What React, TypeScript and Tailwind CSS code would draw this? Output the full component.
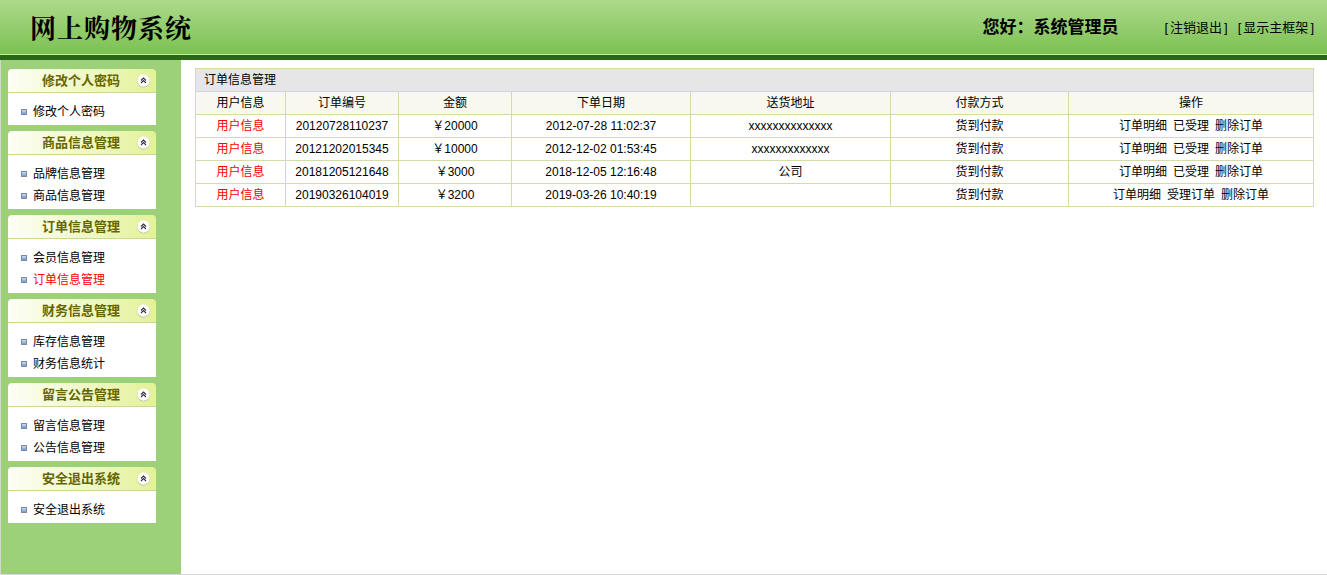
const menus = [
  { title: "修改个人密码", items: ["修改个人密码"] },
  { title: "商品信息管理", items: ["品牌信息管理", "商品信息管理"] },
  { title: "订单信息管理", items: ["会员信息管理", "订单信息管理"] },
  { title: "财务信息管理", items: ["库存信息管理", "财务信息统计"] },
  { title: "留言公告管理", items: ["留言信息管理", "公告信息管理"] },
  { title: "安全退出系统", items: ["安全退出系统"] },
];

const orders = [
  { no: "20120728110237", money: "￥20000", date: "2012-07-28 11:02:37", addr: "xxxxxxxxxxxxxx", ops: ["订单明细", "已受理", "删除订单"] },
  { no: "20121202015345", money: "￥10000", date: "2012-12-02 01:53:45", addr: "xxxxxxxxxxxxx", ops: ["订单明细", "已受理", "删除订单"] },
  { no: "20181205121648", money: "￥3000", date: "2018-12-05 12:16:48", addr: "公司", ops: ["订单明细", "已受理", "删除订单"] },
  { no: "20190326104019", money: "￥3200", date: "2019-03-26 10:40:19", addr: "", ops: ["订单明细", "受理订单", "删除订单"] },
];

const Chevron = () => (
  <svg width="15" height="15" viewBox="0 0 15 15">
    <circle cx="7.5" cy="8" r="6.5" fill="#b9b9a0" />
    <circle cx="7.5" cy="7.5" r="6.2" fill="#ffffff" />
    <path d="M5 7.5 L7.5 5 L10 7.5 M5 10 L7.5 7.5 L10 10" stroke="#333" strokeWidth="1.1" fill="none" />
  </svg>
);

const MenuBox = ({ title, items }: { title: string; items: string[] }) => (
  <div className="w-[148px]">
    <div className="flex h-[24px] items-center rounded-t-[4px] border-b border-[#c9d98f] bg-gradient-to-r from-[#fdfef6] to-[#e3f296] pl-[18px] pr-[5px]">
      <span className="flex-1 text-center text-[13px] font-bold text-[#666600]">{title}</span>
      <Chevron />
    </div>
    <div className="bg-white pb-[2px] pt-[8px]">
      {items.map((it) => (
        <div key={it} className="flex h-[22px] items-center pl-[13px]">
          <span className="mr-[6px] h-[6px] w-[6px] border border-[#7d8a9a] bg-gradient-to-b from-[#c9dcf7] to-[#6f9ad8]" />
          <span className={`text-[12px] ${it === "订单信息管理" ? "text-[#ff0000]" : "text-black"}`}>{it}</span>
        </div>
      ))}
    </div>
  </div>
);

const Cell = ({ children, className = "" }: { children?: React.ReactNode; className?: string }) => (
  <td className={`h-[23px] border border-[#d3dea6] p-0 text-center text-[12px] ${className}`}>{children}</td>
);

const Link = ({ text }: { text: string }) => (
  <span className="text-[13px]">
    [<span className="mx-[2px]">{text}</span>]
  </span>
);

export default function App() {
  return (
    <div className="flex h-[575px] w-full flex-col overflow-hidden font-['Liberation_Sans','Noto_Sans_CJK_SC',sans-serif] leading-none text-black">
      <header className="flex h-[54px] items-center bg-gradient-to-b from-[#acd98a] to-[#7cc152] pl-[30px] pr-[13px]">
        <h1 className="flex-1 font-['Noto_Serif_CJK_SC','Noto_Sans_CJK_SC',serif] text-[26px] font-bold tracking-[1px]">网上购物系统</h1>
        <span className="mr-[46px] text-[17px] font-bold">您好：系统管理员</span>
        <span className="mr-[10px]">
          <Link text="注销退出" />
        </span>
        <Link text="显示主框架" />
      </header>
      <div className="h-px bg-[#c6eb9c]" />
      <div className="h-[5px] bg-[#2a6816]" />
      <div className="flex flex-1 border-b border-[#d8d8d8]">
        <aside className="flex w-[181px] flex-col gap-[6px] border-l border-[#d0d8c8] bg-[#9dd179] pl-[7px] pt-[9px]">
          {menus.map((m) => (
            <MenuBox key={m.title} title={m.title} items={m.items} />
          ))}
        </aside>
        <main className="flex-1 bg-white pl-[14px] pr-[13px] pt-[8px]">
          <table className="w-full table-fixed border-collapse">
            <colgroup>
              <col className="w-[90px]" />
              <col className="w-[113px]" />
              <col className="w-[113px]" />
              <col className="w-[179px]" />
              <col className="w-[200px]" />
              <col className="w-[178px]" />
              <col />
            </colgroup>
            <tbody>
              <tr>
                <td colSpan={7} className="h-[23px] border border-[#d3dea6] bg-[#e6e6e6] pl-[8px] text-[12px]">
                  订单信息管理
                </td>
              </tr>
              <tr className="bg-[#f8f8ee]">
                {["用户信息", "订单编号", "金额", "下单日期", "送货地址", "付款方式", "操作"].map((h) => (
                  <Cell key={h}>{h}</Cell>
                ))}
              </tr>
              {orders.map((o) => (
                <tr key={o.no}>
                  <Cell className="text-[#ff0000]">用户信息</Cell>
                  <Cell>{o.no}</Cell>
                  <Cell>{o.money}</Cell>
                  <Cell>{o.date.replace(" ", "  ")}</Cell>
                  <Cell className={o.addr.startsWith("x") ? "text-[11px]" : ""}>{o.addr}</Cell>
                  <Cell>货到付款</Cell>
                  <Cell>
                    <span className="inline-flex gap-[6px]">
                      {o.ops.map((op) => (
                        <span key={op}>{op}</span>
                      ))}
                    </span>
                  </Cell>
                </tr>
              ))}
            </tbody>
          </table>
        </main>
      </div>
    </div>
  );
}
